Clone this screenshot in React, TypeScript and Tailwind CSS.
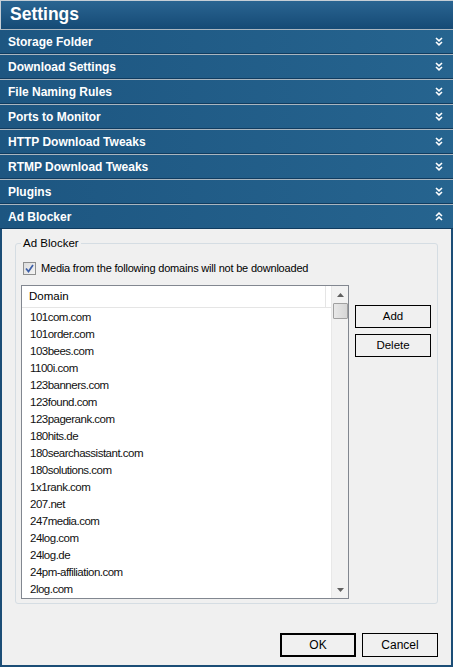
import React from "react";

const sections = [
  "Storage Folder",
  "Download Settings",
  "File Naming Rules",
  "Ports to Monitor",
  "HTTP Download Tweaks",
  "RTMP Download Tweaks",
  "Plugins",
];

const domains = [
  "101com.com",
  "101order.com",
  "103bees.com",
  "1100i.com",
  "123banners.com",
  "123found.com",
  "123pagerank.com",
  "180hits.de",
  "180searchassistant.com",
  "180solutions.com",
  "1x1rank.com",
  "207.net",
  "247media.com",
  "24log.com",
  "24log.de",
  "24pm-affiliation.com",
  "2log.com",
];

function Chevrons({ up }: { up?: boolean }) {
  return (
    <svg width="8" height="9" viewBox="0 0 8 9" className={up ? "rotate-180" : ""}>
      <polyline points="1,1 4,3.8 7,1" fill="none" stroke="white" strokeWidth="1.6" />
      <polyline points="1,5 4,7.8 7,5" fill="none" stroke="white" strokeWidth="1.6" />
    </svg>
  );
}

function Header({ label, up }: { label: string; up?: boolean }) {
  return (
    <div className="h-[25px] flex items-center justify-between pl-[8px] pr-[10px] border-t border-t-[#aab6c0] border-b border-b-[#103c60] bg-gradient-to-r from-[#1d5681] to-[#26648f]">
      <span className="text-white font-bold text-[12px] leading-none pt-[1px]">{label}</span>
      <Chevrons up={up} />
    </div>
  );
}

export default function App() {
  return (
    <div
      className="w-[453px] h-[667px] flex flex-col bg-[#f0f0f0] overflow-hidden"
      style={{ fontFamily: '"Liberation Sans", Arial, sans-serif' }}
    >
      <div className="h-[29px] shrink-0 flex items-center pl-[9px] border-t border-l border-[#c5ced6] bg-gradient-to-b from-[#2a6592] to-[#154a75]">
        <span className="text-white font-bold text-[17.5px] leading-none">Settings</span>
      </div>
      {sections.map((s) => (
        <Header key={s} label={s} />
      ))}
      <Header label="Ad Blocker" up />
      <div className="flex-1 flex flex-col border-l-2 border-r-2 border-b-2 border-[#1b4d76] bg-[#f0f0f0] px-[13px] pt-[14px] text-black">
        <div className="relative border border-[#d5dde3] rounded-[3px] h-[361px] pl-[5px] pr-[5px] pt-[17px]">
          <span className="absolute left-[5px] top-[-8px] bg-[#f0f0f0] px-[2px] text-[11.5px] leading-[14px] text-black">
            Ad Blocker
          </span>
          <div className="flex items-center gap-[5px] ml-[2px] h-[14px]">
            <div className="w-[13px] h-[13px] border border-[#8e8f8f] bg-gradient-to-br from-[#dcdcdc] to-[#f4f4f4] flex items-center justify-center">
              <svg width="9" height="9" viewBox="0 0 9 9">
                <polyline points="1,4.5 3.5,7.5 8,1" fill="none" stroke="#3d5fa8" strokeWidth="1.7" />
              </svg>
            </div>
            <span className="text-[11px] tracking-[-0.2px] leading-none">Media from the following domains will not be downloaded</span>
          </div>
          <div className="flex mt-[10px] gap-[6px]">
            <div className="w-[328px] h-[314px] border border-[#828790] bg-white flex">
              <div className="flex-1 flex flex-col">
                <div className="h-[22px] border-b border-[#e5e5e5] flex items-center pl-[7px] relative">
                  <span className="text-[11.5px]">Domain</span>
                  <div className="absolute right-[5px] top-0 h-[22px] w-px bg-[#e5e5e5]" />
                </div>
                <div className="flex flex-col pt-[1px]">
                  {domains.map((d) => (
                    <div key={d} className="h-[17px] flex items-center pl-[8px] text-[11.5px] tracking-[-0.5px] text-[#111]">
                      {d}
                    </div>
                  ))}
                </div>
              </div>
              <div className="w-[17px] bg-[#f2f2f2] border-l border-[#e8e8e8] flex flex-col items-center justify-between">
                <div className="flex flex-col items-center">
                  <div className="h-[17px] flex items-center justify-center">
                    <svg width="7" height="4" viewBox="0 0 7 4">
                      <polygon points="0,4 3.5,0 7,4" fill="#606060" />
                    </svg>
                  </div>
                  <div className="w-[15px] h-[16px] border border-[#a0a0a0] bg-gradient-to-r from-[#e8e8e8] to-[#d6d6d6] rounded-[1px]" />
                </div>
                <div className="h-[17px] flex items-center justify-center">
                  <svg width="7" height="4" viewBox="0 0 7 4">
                    <polygon points="0,0 3.5,4 7,0" fill="#606060" />
                  </svg>
                </div>
              </div>
            </div>
            <div className="flex flex-col gap-[6px] pt-[20px]">
              <button className="w-[76px] h-[23px] border border-black bg-[#f0f0f0] text-[11.5px] leading-none">Add</button>
              <button className="w-[76px] h-[23px] border border-black bg-[#f0f0f0] text-[11.5px] leading-none">Delete</button>
            </div>
          </div>
        </div>
        <div className="flex justify-end gap-[6px] mt-[29px]">
          <button className="w-[76px] h-[24px] border-2 border-black bg-[#f0f0f0] text-[12px] leading-none">OK</button>
          <button className="w-[76px] h-[24px] border border-black bg-[#f0f0f0] text-[12px] leading-none">Cancel</button>
        </div>
      </div>
    </div>
  );
}
